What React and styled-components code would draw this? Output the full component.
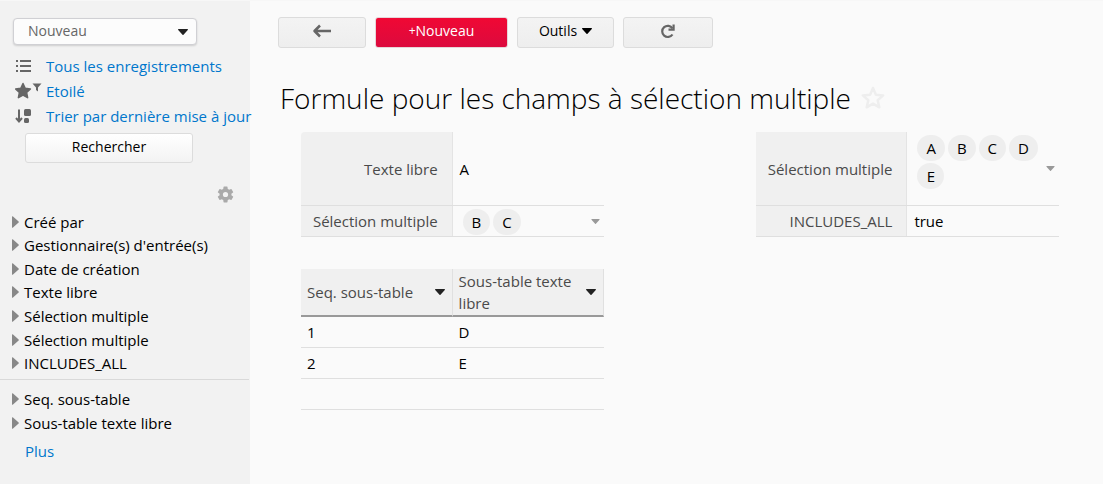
import React from "react";
import styled, { createGlobalStyle, css } from "styled-components";

const GlobalStyle = createGlobalStyle`
  *, *::before, *::after { box-sizing: border-box; }
  body {
    margin: 0;
    background: #fafafa;
    color: #000;
    font-family: "Open Sans", "Noto Sans", sans-serif;
    font-size: 15px;
    line-height: 22px;
  }
  button, select { font: inherit; color: inherit; }
  a { color: #0077cc; text-decoration: none; }
  ul, dl, dd, h1 { margin: 0; padding: 0; }
  ul { list-style: none; }
`;

const Page = styled.div`
  display: flex;
  min-height: 100vh;
  border-top: 1px solid #f7f7f7;
`;

const Sidebar = styled.aside`
  flex: 0 0 250px;
  min-width: 0;
  padding-top: 17px;
  background: #f2f2f2;
`;

const SelectBox = styled.div`
  display: grid;
  align-items: center;
  margin: 0 53px 0 13px;
  > * { grid-area: 1 / 1; }
  > svg { justify-self: end; margin-right: 9px; pointer-events: none; }
`;

const ViewSelect = styled.select`
  appearance: none;
  width: 100%;
  height: 27px;
  padding: 0 28px 2px 14px;
  border: 1px solid #d0d0d4;
  border-radius: 4px;
  background: #fcfcfc;
  box-shadow: 0 1px 2px rgba(0, 0, 0, 0.15);
  color: #666;
  font-size: 14px;
`;

const ViewLinks = styled.ul`
  margin-top: 8px;
`;

const ViewLink = styled.li`
  display: flex;
  align-items: center;
  height: 25px;
  padding-left: 15px;
  white-space: nowrap;
  svg { flex: none; margin-right: 4px; }
`;

const Button = styled.button`
  display: inline-flex;
  align-items: center;
  justify-content: center;
  gap: 5px;
  width: ${(p) => p.$width}px;
  height: ${(p) => p.$height || 31}px;
  padding: 0 0 3px;
  border: 1px solid #dcdcdc;
  border-radius: 3px;
  background: linear-gradient(#f3f3f3, #eeeeee);
  font-size: 14px;
  line-height: 20px;
  cursor: pointer;
  ${(p) => p.$tone === "primary" && css`
    border-color: #e6d5d9;
    background: linear-gradient(#f00834, #dc0a3e);
    color: #fff;
  `}
  ${(p) => p.$tone === "light" && css`
    background: linear-gradient(#ffffff, #f3f3f3);
  `}
`;

const Plus = styled.span`
  margin-right: -5px;
  font-size: 12px;
`;

const SearchRow = styled.div`
  display: flex;
  padding: 5px 0 0 25px;
`;

const IconButton = styled.button`
  display: inline-flex;
  flex: none;
  padding: 0;
  border: 0;
  background: none;
  cursor: pointer;
`;

const SettingsRow = styled.div`
  display: flex;
  justify-content: flex-end;
  padding: 22px 15px 6px 0;
`;

const Facets = styled.ul`
  display: grid;
  grid-auto-rows: 1fr;
  min-height: ${(p) => p.$minHeight}px;
`;

const Facet = styled.li`
  display: flex;
  align-items: center;
  gap: 5px;
  padding-left: 12px;
`;

const Divider = styled.hr`
  height: 1px;
  margin: 4px 1px 7px 0;
  border: 0;
  background: #d9d9d9;
`;

const MoreLink = styled.a`
  display: inline-block;
  margin: 5px 0 0 25px;
`;

const Main = styled.main`
  flex: 1;
  min-width: 0;
  padding: 16px 44px 24px 28px;
`;

const Toolbar = styled.div`
  display: flex;
  gap: 9px;
`;

const TitleRow = styled.div`
  display: flex;
  align-items: center;
  gap: 9px;
  margin: 31px 0 15px 2px;
`;

const Title = styled.h1`
  font-size: 28px;
  font-weight: 300;
  line-height: 38px;
`;

const Record = styled.div`
  display: grid;
  grid-template-columns: repeat(5, minmax(0, 1fr));
  row-gap: 32px;
  padding-left: 23px;
`;

const Fields = styled.dl`
  grid-column: ${(p) => p.$column} / span 2;
  display: grid;
  grid-template-rows: 74px 31px;
`;

const Field = styled.div`
  display: grid;
  grid-template-columns: 1fr 1fr;
  border-bottom: 1px solid #dfdfdf;
`;

const Label = styled.dt`
  display: flex;
  align-items: center;
  justify-content: flex-end;
  padding-right: 14px;
  border-right: 1px solid #e4e4e4;
  background: #f0f0f0;
  color: #4a4a4a;
  white-space: nowrap;
  ${Fields}:first-child ${Field}:first-child > & { border-top-left-radius: 4px; }
`;

const Value = styled.dd`
  display: flex;
  align-items: center;
  padding: 0 4px 0 7px;
`;

const Chips = styled.ul`
  flex: 1;
  display: flex;
  flex-wrap: wrap;
  align-self: flex-start;
  gap: 2px 3px;
  padding: 3px 0 0 3px;
`;

const Chip = styled.li`
  min-width: 27px;
  height: 26px;
  padding: 0 9px;
  border-radius: 13px;
  background: #eeeeee;
  line-height: 26px;
  text-align: center;
`;

const SubTable = styled.table`
  grid-column: 1 / span 2;
  width: 100%;
  table-layout: fixed;
  border-collapse: separate;
  border-spacing: 0;
`;

const HeadCell = styled.th`
  height: 48px;
  padding: 0 7px 0 6px;
  border-right: 1px solid #e0e0e0;
  border-bottom: 2px solid #999;
  background: #f0f0f0;
  color: #4a4a4a;
  font-weight: 400;
  text-align: left;
`;

const HeadContent = styled.div`
  display: flex;
  align-items: center;
  justify-content: space-between;
`;

const Cell = styled.td`
  height: 31px;
  padding: 0 6px;
  border-bottom: 1px solid #dfdfdf;
`;

const Caret = ({ width = 10, height = 6, color = "#222" }) => (
  <svg width={width} height={height} viewBox="0 0 10 6" aria-hidden="true">
    <path d="M.6 0h8.8c.5 0 .8.6.4 1L5.500 5.700a.7.7 0 0 1-1 0L.2 1C-.2.600.1 0 .6 0z" fill={color} />
  </svg>
);

const FacetArrow = () => (
  <svg width="7" height="12" viewBox="0 0 7 12" aria-hidden="true">
    <path d="M0 .8C0 .2.5 0 1 .4l5.600 5c.4.400.4.800 0 1.200l-5.600 5c-.5.400-1 .2-1-.4z" fill="#888" />
  </svg>
);

const ListIcon = () => (
  <svg width="27" height="18" viewBox="0 0 27 18" fill="#666" aria-hidden="true">
    <path d="M1 3h2v2H1zM1 8h2v2H1zM1 13h2v2H1zM5 3h11v2H5zM5 8h11v2H5zM5 13h11v2H5z" />
  </svg>
);

const StarFilterIcon = () => (
  <svg width="27" height="18" viewBox="0 0 27 18" fill="#666" aria-hidden="true">
    <path d="M8 1.500l2.200 4.700 5.200.7-3.800 3.600 1 5.200L8 13.200l-4.600 2.500 1-5.200L.6 6.900l5.200-.7z" stroke="#666" strokeWidth="1.500" strokeLinejoin="round" />
    <path d="M17.500 1.500h9L23 5.500v4l-2-1.500V5.500z" />
  </svg>
);

const SortIcon = () => (
  <svg width="27" height="18" viewBox="0 0 27 18" fill="#666" aria-hidden="true">
    <path d="M4 2.500v12M1 11l3 3.500L7 11" fill="none" stroke="#666" strokeWidth="2" />
    <rect x="9" y="2" width="7" height="7" rx="1.500" />
    <rect x="9" y="11" width="5" height="5" rx="1.500" />
  </svg>
);

const GearIcon = () => (
  <svg width="19" height="19" viewBox="0 0 24 24" fill="#aaa" aria-hidden="true">
    <path d="M19.430 12.980c.04-.32.07-.64.07-.98s-.03-.66-.07-.98l2.110-1.650a.5.5 0 0 0 .12-.64l-2-3.460a.5.5 0 0 0-.61-.22l-2.490 1a7.300 7.300 0 0 0-1.690-.98l-.38-2.650A.49.49 0 0 0 14 2h-4a.49.49 0 0 0-.49.42l-.38 2.650c-.61.25-1.170.59-1.690.98l-2.490-1a.5.5 0 0 0-.61.22l-2 3.460a.5.5 0 0 0 .12.64l2.110 1.650c-.04.32-.07.65-.07.98s.03.66.07.98l-2.110 1.650a.5.5 0 0 0-.12.640l2 3.460c.12.220.390.300.610.220l2.490-1c.52.400 1.080.730 1.690.980l.380 2.650c.03.240.240.420.490.420h4c.250 0 .460-.180.490-.420l.380-2.650c.610-.250 1.170-.590 1.690-.980l2.490 1c.230.090.490 0 .610-.220l2-3.460a.5.5 0 0 0-.12-.640zM12 15.300a3.300 3.300 0 1 1 0-6.600 3.300 3.300 0 0 1 0 6.600z" />
  </svg>
);

const BackIcon = () => (
  <svg width="20" height="14" viewBox="0 0 20 14" fill="none" stroke="#666" strokeWidth="2.500" strokeLinejoin="round" aria-hidden="true">
    <path d="M2 7h17M8 1.500L2.500 7 8 12.500" />
  </svg>
);

const ReloadIcon = () => (
  <svg width="16" height="16" viewBox="0 0 16 16" fill="none" stroke="#666" strokeWidth="2.200" aria-hidden="true">
    <path d="M12.500 11.500A5.600 5.600 0 1 1 12.500 5.300" />
    <path d="M13.600 1.500v5.200H8.500" />
  </svg>
);

const StarOutline = () => (
  <svg width="26" height="26" viewBox="0 0 26 26" fill="none" stroke="#eee" strokeWidth="2.500" strokeLinejoin="round" aria-hidden="true">
    <path d="M13 3l2.900 6.700 7.300.7-5.500 4.800 1.600 7.100L13 18.600l-6.300 3.700 1.600-7.100-5.500-4.800 7.300-.7z" />
  </svg>
);

const facets = [
  "Créé par",
  "Gestionnaire(s) d'entrée(s)",
  "Date de création",
  "Texte libre",
  "Sélection multiple",
  "Sélection multiple",
  "INCLUDES_ALL",
];
const subFacets = ["Seq. sous-table", "Sous-table texte libre"];
const rows = [["1", "D"], ["2", "E"], ["", ""]];

const FacetList = ({ items, minHeight }) => (
  <Facets $minHeight={minHeight}>
    {items.map((name, i) => (
      <Facet key={i}><FacetArrow />{name}</Facet>
    ))}
  </Facets>
);

const MultiValue = ({ values }) => (
  <Value>
    <Chips>{values.map((v) => <Chip key={v}>{v}</Chip>)}</Chips>
    <IconButton aria-label="Sélection multiple"><Caret width={9} height={5} color="#999" /></IconButton>
  </Value>
);

export default function App() {
  return (
    <>
      <GlobalStyle />
      <Page>
        <Sidebar>
          <SelectBox>
            <ViewSelect aria-label="Vue" defaultValue="Nouveau">
              <option>Nouveau</option>
            </ViewSelect>
            <Caret />
          </SelectBox>
          <ViewLinks>
            <ViewLink><ListIcon /><a href="#tous">Tous les enregistrements</a></ViewLink>
            <ViewLink><StarFilterIcon /><a href="#etoile">Etoilé</a></ViewLink>
            <ViewLink><SortIcon /><a href="#trier">Trier par dernière mise à jour</a></ViewLink>
          </ViewLinks>
          <SearchRow>
            <Button $tone="light" $width={168} $height={30}>Rechercher</Button>
          </SearchRow>
          <SettingsRow>
            <IconButton aria-label="Paramètres"><GearIcon /></IconButton>
          </SettingsRow>
          <FacetList items={facets} minHeight={165} />
          <Divider />
          <FacetList items={subFacets} minHeight={48} />
          <MoreLink href="#plus">Plus</MoreLink>
        </Sidebar>
        <Main>
          <Toolbar>
            <Button $width={88} aria-label="Retour"><BackIcon /></Button>
            <Button $tone="primary" $width={133}><Plus>+</Plus>Nouveau</Button>
            <Button $width={97}>Outils <Caret color="#000" /></Button>
            <Button $width={90} aria-label="Actualiser"><ReloadIcon /></Button>
          </Toolbar>
          <TitleRow>
            <Title>Formule pour les champs à sélection multiple</Title>
            <IconButton aria-label="Ajouter aux favoris"><StarOutline /></IconButton>
          </TitleRow>
          <Record>
            <Fields $column={1}>
              <Field><Label>Texte libre</Label><Value>A</Value></Field>
              <Field><Label>Sélection multiple</Label><MultiValue values={["B", "C"]} /></Field>
            </Fields>
            <Fields $column={4}>
              <Field><Label>Sélection multiple</Label><MultiValue values={["A", "B", "C", "D", "E"]} /></Field>
              <Field><Label>INCLUDES_ALL</Label><Value>true</Value></Field>
            </Fields>
            <SubTable>
              <thead>
                <tr>
                  {subFacets.map((name) => (
                    <HeadCell key={name} scope="col">
                      <HeadContent>
                        {name}
                        <IconButton aria-label={`Trier ${name}`}><Caret /></IconButton>
                      </HeadContent>
                    </HeadCell>
                  ))}
                </tr>
              </thead>
              <tbody>
                {rows.map((row, i) => (
                  <tr key={i}>{row.map((v, j) => <Cell key={j}>{v}</Cell>)}</tr>
                ))}
              </tbody>
            </SubTable>
          </Record>
        </Main>
      </Page>
    </>
  );
}
